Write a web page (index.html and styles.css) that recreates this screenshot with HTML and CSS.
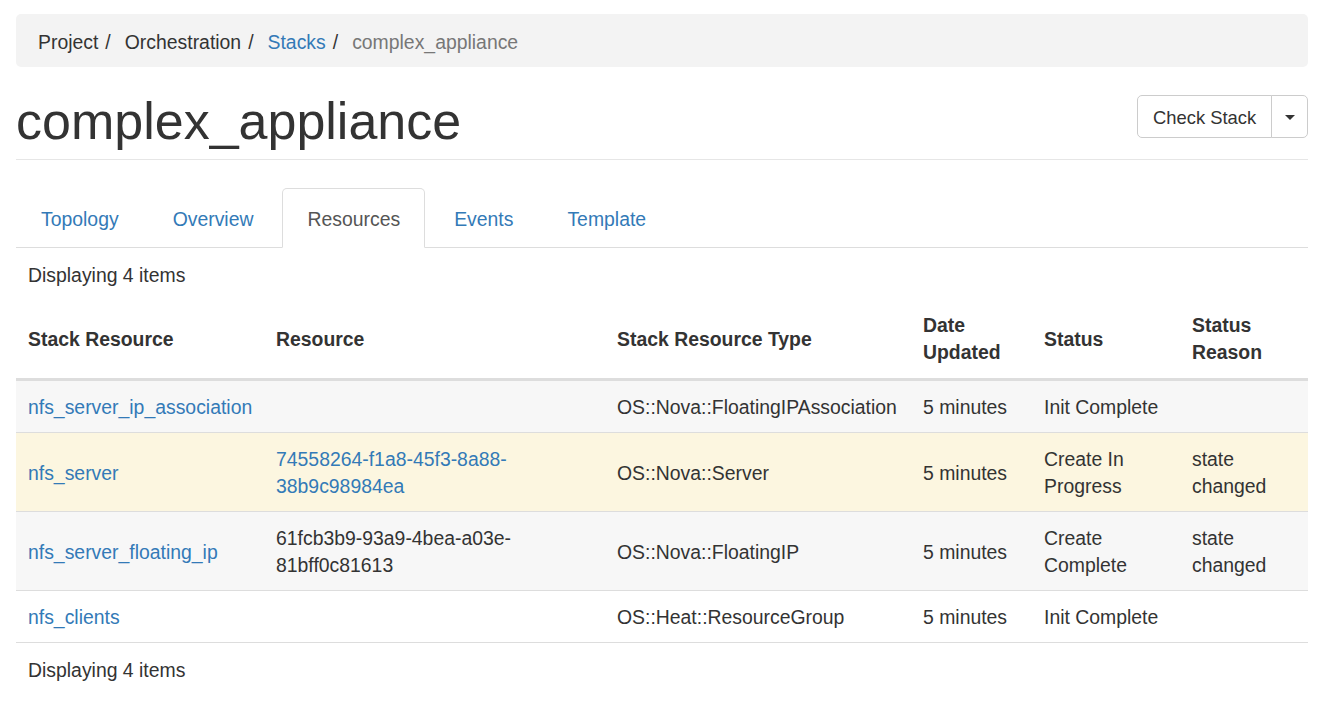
FILE: index.html
```html
<!DOCTYPE html>
<html lang="en">
<head>
<meta charset="utf-8">
<title>complex_appliance - Stack Details</title>
<link rel="stylesheet" href="styles.css">
</head>
<body>
<div class="page">
  <nav class="breadcrumb">
    <span class="crumb">Project</span><span class="sep">/</span>
    <span class="crumb">Orchestration</span><span class="sep">/</span>
    <a class="crumb link" href="#">Stacks</a><span class="sep">/</span>
    <span class="crumb active">complex_appliance</span>
  </nav>

  <header class="page-header">
    <h1 class="title">complex_appliance</h1>
    <div class="btn-group">
      <button class="btn btn-main">Check Stack</button>
      <button class="btn btn-caret"><span class="caret"></span></button>
    </div>
  </header>

  <ul class="tabs">
    <li class="tab"><a href="#">Topology</a></li>
    <li class="tab"><a href="#">Overview</a></li>
    <li class="tab active"><a href="#">Resources</a></li>
    <li class="tab"><a href="#">Events</a></li>
    <li class="tab"><a href="#">Template</a></li>
  </ul>

  <table class="table">
    <colgroup>
      <col class="c1"><col class="c2"><col class="c3"><col class="c4"><col class="c5"><col class="c6">
    </colgroup>
    <thead>
      <tr class="caption-row"><td colspan="6">Displaying 4 items</td></tr>
      <tr class="head-row">
        <th>Stack Resource</th>
        <th>Resource</th>
        <th>Stack Resource Type</th>
        <th>Date Updated</th>
        <th>Status</th>
        <th>Status Reason</th>
      </tr>
    </thead>
    <tbody>
      <tr class="striped">
        <td><a href="#">nfs_server_ip_association</a></td>
        <td></td>
        <td>OS::Nova::FloatingIPAssociation</td>
        <td>5 minutes</td>
        <td>Init Complete</td>
        <td></td>
      </tr>
      <tr class="warning">
        <td><a href="#">nfs_server</a></td>
        <td><a href="#">74558264-f1a8-45f3-8a88-38b9c98984ea</a></td>
        <td>OS::Nova::Server</td>
        <td>5 minutes</td>
        <td>Create In Progress</td>
        <td>state changed</td>
      </tr>
      <tr class="striped">
        <td><a href="#">nfs_server_floating_ip</a></td>
        <td>61fcb3b9-93a9-4bea-a03e-81bff0c81613</td>
        <td>OS::Nova::FloatingIP</td>
        <td>5 minutes</td>
        <td>Create Complete</td>
        <td>state changed</td>
      </tr>
      <tr>
        <td><a href="#">nfs_clients</a></td>
        <td></td>
        <td>OS::Heat::ResourceGroup</td>
        <td>5 minutes</td>
        <td>Init Complete</td>
        <td></td>
      </tr>
    </tbody>
    <tfoot>
      <tr class="caption-row foot"><td colspan="6">Displaying 4 items</td></tr>
    </tfoot>
  </table>
</div>
</body>
</html>
```

FILE: styles.css
```css
* { box-sizing: border-box; }
html, body { margin: 0; padding: 0; background: #fff; }
body {
  font-family: "Liberation Sans", Arial, Helvetica, sans-serif;
  font-size: 19.4px;
  line-height: 27px;
  color: #333;
}
a { color: #337ab7; text-decoration: none; }

.page { padding: 14px 20px 0 16px; }

.breadcrumb {
  display: flex;
  align-items: center;
  height: 53px;
  padding: 3px 22px 0;
  background: #f3f3f3;
  border-radius: 5px;
}
.crumb { color: #333; }
.crumb.link { color: #337ab7; }
.crumb.active { color: #777; }
.sep { margin: 0 14px 0 7px; color: #333; }

.page-header {
  display: flex;
  justify-content: space-between;
  align-items: flex-start;
  padding-top: 28px;
  padding-bottom: 11px;
  border-bottom: 1px solid #e6e6e6;
}
.title {
  margin: -1px 0 0 0;
  font-size: 52px;
  line-height: 54px;
  font-weight: 400;
  color: #333;
}
.btn-group { display: flex; }
.btn {
  font-family: inherit;
  font-size: 18.4px;
  line-height: 27px;
  color: #333;
  background: #fff;
  border: 1px solid #ccc;
  height: 43px;
  margin: 0;
  white-space: nowrap;
}
.btn-main {
  padding: 1px 15px 0;
  width: 135px;
  border-radius: 5px 0 0 5px;
}
.btn-caret {
  width: 37px;
  margin-left: -1px;
  border-radius: 0 5px 5px 0;
  display: flex;
  align-items: center;
  justify-content: center;
  padding: 2px 0 0;
}
.caret {
  width: 0; height: 0;
  border-left: 5px solid transparent;
  border-right: 5px solid transparent;
  border-top: 5px solid #333;
}

.tabs {
  list-style: none;
  margin: 28px 0 0 0;
  padding: 0;
  display: flex;
  border-bottom: 1px solid #ddd;
}
.tab { margin-right: 4px; margin-bottom: -1px; }
.tab a {
  display: block;
  padding: 17px 24px 14px;
  line-height: 27px;
  border: 1px solid transparent;
  border-radius: 5px 5px 0 0;
  color: #337ab7;
}
.tab.active a {
  color: #555;
  background: #fff;
  border-color: #ddd #ddd transparent;
}

.table {
  width: 100%;
  table-layout: fixed;
  border-collapse: collapse;
  border-spacing: 0;
}
.c1 { width: 248px; }
.c2 { width: 341px; }
.c3 { width: 306px; }
.c4 { width: 121px; }
.c5 { width: 148px; }
.c6 { width: 128px; }

.table td, .table th {
  padding: 13px 12px 11px;
  text-align: left;
  vertical-align: middle;
}
.caption-row td { padding: 14px 12px 12px; }
.head-row th {
  font-weight: 700;
  padding: 11px 12px 12px;
  border-bottom: 3px solid #ddd;
}
.table tbody td { border-top: 1px solid #ddd; }
.table tbody tr:first-child td { border-top: 0; }
.table tbody tr.striped { background: #f7f7f7; }
.table tbody tr.warning { background: #fcf6e0; }
.foot td { border-top: 1px solid #ddd; }
```
